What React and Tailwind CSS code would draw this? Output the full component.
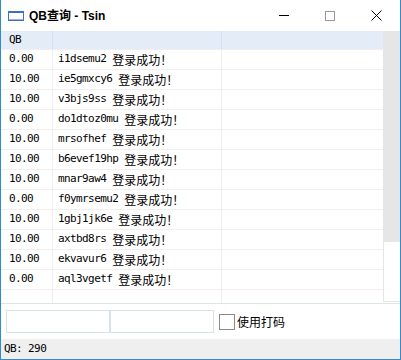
import React from "react";

const rows = [
  ["0.00", "i1dsemu2"],
  ["10.00", "ie5gmxcy6"],
  ["10.00", "v3bjs9ss"],
  ["0.00", "do1dtoz0mu"],
  ["10.00", "mrsofhef"],
  ["10.00", "b6evef19hp"],
  ["10.00", "mnar9aw4"],
  ["0.00", "f0ymrsemu2"],
  ["10.00", "1gbj1jk6e"],
  ["10.00", "axtbd8rs"],
  ["10.00", "ekvavur6"],
  ["0.00", "aql3vgetf"],
];

const mono = { fontFamily: '"DejaVu Sans Mono", "Liberation Mono", monospace' };

export default function App() {
  return (
    <div className="w-[401px] h-[360px] bg-white border-l border-r border-b border-[#2e8bd6] flex flex-col overflow-hidden text-black">
      {/* Title bar */}
      <div className="h-[31px] flex items-center shrink-0">
        <svg width="16" height="10" viewBox="0 0 16 10" className="ml-[7px] mt-[1px]">
          <rect x="0.5" y="0.5" width="15" height="9" fill="#ffffff" stroke="#3d6fc2" />
          <rect x="0" y="0" width="16" height="2" fill="#3d6fc2" />
          <rect x="1" y="8" width="14" height="1" fill="#9bb3de" />
        </svg>
        <span
          className="ml-[5px] text-[12px] font-bold leading-none"
          style={{ fontFamily: '"Liberation Sans", "Noto Sans CJK SC", sans-serif' }}
        >
          QB查询 - Tsin
        </span>
        <div className="flex-1" />
        <div className="w-[46px] h-[31px] flex items-center justify-center">
          <div className="w-[10px] h-px bg-black" />
        </div>
        <div className="w-[46px] h-[31px] flex items-center justify-center">
          <div className="w-[10px] h-[10px] border border-[#999999]" />
        </div>
        <div className="w-[46px] h-[31px] flex items-center justify-center mr-[1px]">
          <svg width="11" height="11" viewBox="0 0 11 11">
            <path d="M0.5 0.5 L10.5 10.5 M10.5 0.5 L0.5 10.5" stroke="#000" strokeWidth="1" />
          </svg>
        </div>
      </div>

      {/* List */}
      <div className="h-[273px] shrink-0 flex border-b border-[#dbe5ea]">
        <div className="flex-1 flex flex-col">
          <div className="h-[18px] flex bg-[#e3ecf7] items-center text-[11px] tracking-[-0.6px]" style={mono}>
            <div className="w-[52px] pl-[8px] h-full flex items-center border-r border-[#d3e1f1]">QB</div>
            <div className="w-[169px] h-full border-r border-[#d3e1f1]" />
            <div className="flex-1" />
          </div>
          {rows.map(([qb, name], i) => (
            <div key={i} className="h-[20px] flex border-t border-[#efefef]">
              <div className="w-[52px] pl-[8px] flex items-center border-r border-[#efefef] text-[11px] tracking-[-0.6px]" style={mono}>
                {qb}
              </div>
              <div className="w-[169px] pl-[5px] flex items-center border-r border-[#efefef] whitespace-nowrap">
                <span className="text-[11px] tracking-[-0.6px]" style={mono}>{name}&nbsp;</span>
                <span
                  className="text-[12px] leading-none"
                  style={{ fontFamily: '"Noto Sans CJK SC", sans-serif' }}
                >
                  登录成功！
                </span>
              </div>
              <div className="flex-1" />
            </div>
          ))}
          <div className="flex-1 flex border-t border-[#efefef]">
            <div className="w-[52px] border-r border-[#efefef]" />
            <div className="w-[169px] border-r border-[#efefef]" />
            <div className="flex-1" />
          </div>
        </div>
        <div className="w-[17px] flex flex-col">
          <div className="h-[211px] bg-[#e6e6e6]" />
          <div className="flex-1 border-l border-b border-[#e6e6e6] mb-[1px]" />
        </div>
      </div>

      {/* Bottom panel */}
      <div className="h-[35px] shrink-0 flex items-center pl-[5px]">
        <div className="w-[104px] h-[23px] border border-[#d6e2e7]" />
        <div className="w-[104px] h-[23px] border border-[#d6e2e7]" />
        <div className="ml-[5px] w-[16px] h-[16px] border border-[#8a8a8a] bg-white" />
        <span
          className="ml-[2px] text-[12px] leading-none"
          style={{ fontFamily: '"Noto Sans CJK SC", sans-serif' }}
        >
          使用打码
        </span>
      </div>

      {/* Status bar */}
      <div className="h-[20px] shrink-0 bg-[#efefef] flex items-center pl-[3px] text-[11px] tracking-[-0.6px]" style={mono}>
        QB: 290
      </div>
    </div>
  );
}
